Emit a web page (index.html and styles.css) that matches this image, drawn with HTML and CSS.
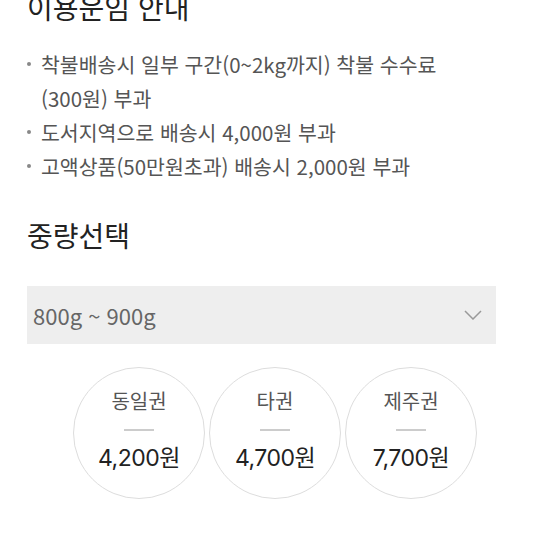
FILE: index.html
```html
<!DOCTYPE html>
<html lang="ko">
<head>
    <meta charset="UTF-8">
    <meta name="viewport" content="width=device-width, initial-scale=1.0">
    <title>이용운임 안내</title>
    <link rel="stylesheet" href="styles.css">
</head>
<body>

    <section class="fee-info">
        <h2 class="section-title">이용운임 안내</h2>
        <ul class="fee-list">
            <li>착불배송시 일부 구간(0~2kg까지) 착불 수수료 (300원) 부과</li>
            <li>도서지역으로 배송시 4,000원 부과</li>
            <li>고액상품(50만원초과) 배송시 2,000원 부과</li>
        </ul>
    </section>

    <section class="weight">
        <h2 class="section-title">중량선택</h2>
        <div class="select-box">
            <span class="select-value">800g ~ 900g</span>
            <svg class="chevron" width="18" height="10" viewBox="0 0 18 10">
                <path d="M1 1 L9 9 L17 1" fill="none" stroke="#999" stroke-width="1.5"/>
            </svg>
        </div>

        <div class="zones">
            <div class="zone">
                <span class="zone-name">동일권</span>
                <span class="zone-bar"></span>
                <span class="zone-price">4,200원</span>
            </div>
            <div class="zone">
                <span class="zone-name">타권</span>
                <span class="zone-bar"></span>
                <span class="zone-price">4,700원</span>
            </div>
            <div class="zone">
                <span class="zone-name">제주권</span>
                <span class="zone-bar"></span>
                <span class="zone-price">7,700원</span>
            </div>
        </div>
    </section>

</body>
</html>
```

FILE: styles.css
```css
body {
    margin: 0;
    padding: 0 27px;
    font-family: "Noto Sans CJK KR", "Noto Sans", sans-serif;
    background-color: #fff;
    color: #222;
}
.section-title {
    margin: 0;
    font-size: 28px;
    font-weight: 400;
    color: #222;
    line-height: 1.2;
}
.fee-info .section-title {
    margin-top: -9px;
}
.fee-list {
    list-style: none;
    margin: 22px 0 0;
    padding: 0;
    width: 430px;
    font-size: 20.5px;
    line-height: 34px;
    color: #555;
    word-break: keep-all;
}
.fee-list li {
    position: relative;
    padding-left: 14px;
}
.fee-list li::before {
    content: "";
    position: absolute;
    left: 0;
    top: 15px;
    width: 4px;
    height: 4px;
    border-radius: 50%;
    background-color: #888;
}
.weight {
    margin-top: 36px;
}
.select-box {
    display: flex;
    align-items: center;
    justify-content: space-between;
    height: 58px;
    margin-top: 34px;
    padding: 0 14px 0 6px;
    background-color: #eee;
    width: 449px;
}
.select-value {
    font-size: 22px;
    color: #666;
}
.zones {
    display: flex;
    justify-content: center;
    gap: 4px;
    margin-top: 23px;
    padding-right: 4px;
}
.zone {
    display: flex;
    flex-direction: column;
    align-items: center;
    width: 132px;
    height: 132px;
    border: 1px solid #ddd;
    border-radius: 50%;
    box-sizing: border-box;
    padding-top: 18px;
}
.zone-name {
    font-size: 20px;
    color: #555;
    line-height: 30px;
}
.zone-bar {
    width: 30px;
    height: 2px;
    background-color: #ccc;
    margin: 13px 0 12px;
}
.zone-price {
    font-family: "Inter", "Noto Sans CJK KR", sans-serif;
    font-size: 23px;
    color: #222;
    line-height: 30px;
    letter-spacing: -0.5px;
}
```
